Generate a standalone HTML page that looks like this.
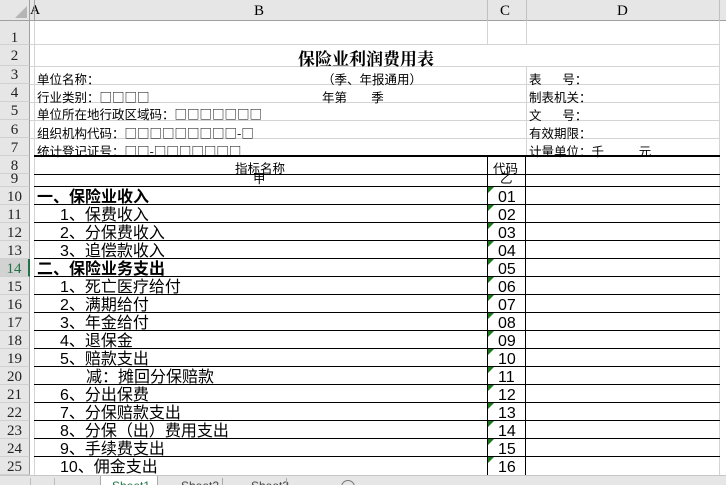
<!DOCTYPE html>
<html><head><meta charset="utf-8"><style>
*{margin:0;padding:0;box-sizing:border-box}
body{width:726px;height:485px;overflow:hidden;background:#fff;position:relative;font-family:"Liberation Sans","Noto Sans CJK SC",sans-serif;color:#000}
.a{position:absolute;white-space:nowrap}
.rh{position:absolute;left:0;width:30px;background:#e6e6e6;border-bottom:1px solid #d0d0d0;border-right:1px solid #a0a0a0;font-family:"Liberation Serif","Noto Sans CJK SC",serif;font-size:15px;text-align:center;color:#222}
.hl{position:absolute;left:30px;width:690px;height:1px;background:#d4d4d4}
.bl{position:absolute;left:34px;width:686px;height:1px;background:#000}
.t12{font-size:12.5px}
.bx{font-family:"Noto Sans CJK SC",sans-serif;font-size:12.5px;letter-spacing:0}
.t16{font-size:16px;line-height:18px}
</style></head><body>
<div class="a" style="left:0;top:0;width:726px;height:21px;background:#e6e6e6;border-bottom:1px solid #a0a0a0"></div>
<div class="a" style="left:0;top:0;width:30px;height:21px;border-right:1px solid #a0a0a0"></div>
<div class="a" style="left:15px;top:6px;width:0;height:0;border-left:12px solid transparent;border-bottom:12px solid #b5b5b5"></div>
<div class="a" style="left:30px;top:3px;font-family:'Liberation Serif',serif;font-size:14px">A</div>
<div class="a" style="left:34px;top:0;width:1px;height:21px;background:#a0a0a0"></div>
<div class="a" style="left:487px;top:0;width:1px;height:21px;background:#c0c0c0"></div>
<div class="a" style="left:526px;top:0;width:1px;height:21px;background:#c0c0c0"></div>
<div class="a" style="left:719px;top:0;width:1px;height:21px;background:#c0c0c0"></div>
<div class="a" style="left:254px;top:3px;font-family:'Liberation Serif',serif;font-size:15px">B</div>
<div class="a" style="left:500px;top:3px;font-family:'Liberation Serif',serif;font-size:15px">C</div>
<div class="a" style="left:617px;top:3px;font-family:'Liberation Serif',serif;font-size:15px">D</div>
<div class="rh" style="top:21px;height:24px;line-height:34px">1</div>
<div class="rh" style="top:45px;height:21px;line-height:22px">2</div>
<div class="rh" style="top:66px;height:18px;line-height:18px">3</div>
<div class="rh" style="top:84px;height:18px;line-height:18px">4</div>
<div class="rh" style="top:102px;height:18px;line-height:18px">5</div>
<div class="rh" style="top:120px;height:18px;line-height:20px">6</div>
<div class="rh" style="top:138px;height:18px;line-height:20px">7</div>
<div class="rh" style="top:156px;height:18px;line-height:20px">8</div>
<div class="rh" style="top:174px;height:13px;line-height:11px">9</div>
<div class="rh" style="top:187px;height:18px;line-height:21px">10</div>
<div class="rh" style="top:205px;height:18px;line-height:21px">11</div>
<div class="rh" style="top:223px;height:18px;line-height:21px">12</div>
<div class="rh" style="top:241px;height:18px;line-height:21px">13</div>
<div class="rh" style="top:259px;height:18px;line-height:21px;color:#217346;background:#d2d2d2;border-right:2px solid #217346">14</div>
<div class="rh" style="top:277px;height:18px;line-height:21px">15</div>
<div class="rh" style="top:295px;height:18px;line-height:21px">16</div>
<div class="rh" style="top:313px;height:18px;line-height:21px">17</div>
<div class="rh" style="top:331px;height:18px;line-height:21px">18</div>
<div class="rh" style="top:349px;height:18px;line-height:21px">19</div>
<div class="rh" style="top:367px;height:18px;line-height:21px">20</div>
<div class="rh" style="top:385px;height:18px;line-height:21px">21</div>
<div class="rh" style="top:403px;height:18px;line-height:21px">22</div>
<div class="rh" style="top:421px;height:18px;line-height:21px">23</div>
<div class="rh" style="top:439px;height:18px;line-height:21px">24</div>
<div class="rh" style="top:457px;height:18px;line-height:21px">25</div>
<div class="hl" style="top:44px"></div>
<div class="hl" style="top:66px"></div>
<div class="hl" style="top:84px"></div>
<div class="hl" style="top:102px"></div>
<div class="hl" style="top:120px"></div>
<div class="hl" style="top:138px"></div>
<div class="a" style="left:34px;top:21px;width:1px;height:454px;background:#d4d4d4"></div>
<div class="a" style="left:487px;top:21px;width:1px;height:24px;background:#d4d4d4"></div>
<div class="a" style="left:526px;top:21px;width:1px;height:24px;background:#d4d4d4"></div>
<div class="a" style="left:526px;top:66px;width:1px;height:90px;background:#d4d4d4"></div>
<div class="a" style="left:719px;top:21px;width:1px;height:454px;background:#d4d4d4"></div>
<div class="a" style="left:34px;top:155px;width:686px;height:2px;background:#000"></div>
<div class="bl" style="top:174px"></div>
<div class="bl" style="top:186px"></div>
<div class="bl" style="top:204px"></div>
<div class="bl" style="top:222px"></div>
<div class="bl" style="top:240px"></div>
<div class="bl" style="top:258px"></div>
<div class="bl" style="top:276px"></div>
<div class="bl" style="top:294px"></div>
<div class="bl" style="top:312px"></div>
<div class="bl" style="top:330px"></div>
<div class="bl" style="top:348px"></div>
<div class="bl" style="top:366px"></div>
<div class="bl" style="top:384px"></div>
<div class="bl" style="top:402px"></div>
<div class="bl" style="top:420px"></div>
<div class="bl" style="top:438px"></div>
<div class="bl" style="top:456px"></div>
<div class="a" style="left:487px;top:156px;width:1px;height:319px;background:#000"></div>
<div class="a" style="left:525px;top:156px;width:1px;height:319px;background:#000"></div>
<div class="a" style="left:488px;top:187px;border-top:6px solid #1a7a1a;border-right:6px solid transparent"></div>
<div class="a" style="left:488px;top:205px;border-top:6px solid #1a7a1a;border-right:6px solid transparent"></div>
<div class="a" style="left:488px;top:223px;border-top:6px solid #1a7a1a;border-right:6px solid transparent"></div>
<div class="a" style="left:488px;top:241px;border-top:6px solid #1a7a1a;border-right:6px solid transparent"></div>
<div class="a" style="left:488px;top:259px;border-top:6px solid #1a7a1a;border-right:6px solid transparent"></div>
<div class="a" style="left:488px;top:277px;border-top:6px solid #1a7a1a;border-right:6px solid transparent"></div>
<div class="a" style="left:488px;top:295px;border-top:6px solid #1a7a1a;border-right:6px solid transparent"></div>
<div class="a" style="left:488px;top:313px;border-top:6px solid #1a7a1a;border-right:6px solid transparent"></div>
<div class="a" style="left:488px;top:331px;border-top:6px solid #1a7a1a;border-right:6px solid transparent"></div>
<div class="a" style="left:488px;top:349px;border-top:6px solid #1a7a1a;border-right:6px solid transparent"></div>
<div class="a" style="left:488px;top:367px;border-top:6px solid #1a7a1a;border-right:6px solid transparent"></div>
<div class="a" style="left:488px;top:385px;border-top:6px solid #1a7a1a;border-right:6px solid transparent"></div>
<div class="a" style="left:488px;top:403px;border-top:6px solid #1a7a1a;border-right:6px solid transparent"></div>
<div class="a" style="left:488px;top:421px;border-top:6px solid #1a7a1a;border-right:6px solid transparent"></div>
<div class="a" style="left:488px;top:439px;border-top:6px solid #1a7a1a;border-right:6px solid transparent"></div>
<div class="a" style="left:488px;top:457px;border-top:6px solid #1a7a1a;border-right:6px solid transparent"></div>
<div class="a" style="left:298px;top:45px;font-family:'Liberation Serif','Noto Serif CJK SC',serif;font-weight:bold;font-size:17px">保险业利润费用表</div>
<div class="a t12" style="left:37px;top:69px">单位名称：</div>
<div class="a t12" style="left:322px;top:69px">（季、年报通用）</div>
<div class="a t12" style="left:529px;top:69px">表&nbsp;&nbsp;&nbsp;&nbsp;&nbsp;&nbsp;号：</div>
<div class="a t12" style="left:37px;top:87px">行业类别：<span class="bx">□□□□</span></div>
<div class="a t12" style="left:322px;top:87px">年第&nbsp;&nbsp;&nbsp;&nbsp;&nbsp;&nbsp;&nbsp;季</div>
<div class="a t12" style="left:529px;top:87px">制表机关：</div>
<div class="a t12" style="left:37px;top:104px">单位所在地行政区域码：<span class="bx">□□□□□□□</span></div>
<div class="a t12" style="left:529px;top:105px">文&nbsp;&nbsp;&nbsp;&nbsp;&nbsp;&nbsp;号：</div>
<div class="a t12" style="left:37px;top:123px">组织机构代码：<span class="bx">□□□□□□□□□-□</span></div>
<div class="a t12" style="left:529px;top:123px">有效期限：</div>
<div class="a t12" style="left:37px;top:141px">统计登记证号：<span class="bx">□□-□□□□□□□</span></div>
<div class="a t12" style="left:529px;top:141px">计量单位：千&nbsp;&nbsp;&nbsp;&nbsp;&nbsp;&nbsp;&nbsp;&nbsp;&nbsp;&nbsp;元</div>
<div class="a t12" style="left:235px;top:158px">指标名称</div>
<div class="a t12" style="left:493px;top:158px">代码</div>
<div class="a t12" style="left:253px;top:172px;line-height:14px">甲</div>
<div class="a t12" style="left:500px;top:172px;line-height:14px">乙</div>
<div class="a t16" style="left:37px;top:189px;font-weight:bold">一、保险业收入</div>
<div class="a t16" style="left:60px;top:207px">1、保费收入</div>
<div class="a t16" style="left:60px;top:225px">2、分保费收入</div>
<div class="a t16" style="left:60px;top:243px">3、追偿款收入</div>
<div class="a t16" style="left:37px;top:261px;font-weight:bold">二、保险业务支出</div>
<div class="a t16" style="left:60px;top:279px">1、死亡医疗给付</div>
<div class="a t16" style="left:60px;top:297px">2、满期给付</div>
<div class="a t16" style="left:60px;top:315px">3、年金给付</div>
<div class="a t16" style="left:60px;top:333px">4、退保金</div>
<div class="a t16" style="left:60px;top:351px">5、赔款支出</div>
<div class="a t16" style="left:86px;top:369px">减：摊回分保赔款</div>
<div class="a t16" style="left:60px;top:387px">6、分出保费</div>
<div class="a t16" style="left:60px;top:405px">7、分保赔款支出</div>
<div class="a t16" style="left:60px;top:423px">8、分保（出）费用支出</div>
<div class="a t16" style="left:60px;top:441px">9、手续费支出</div>
<div class="a t16" style="left:60px;top:459px">10、佣金支出</div>
<div class="a t16" style="left:498px;top:189px">01</div>
<div class="a t16" style="left:498px;top:207px">02</div>
<div class="a t16" style="left:498px;top:225px">03</div>
<div class="a t16" style="left:498px;top:243px">04</div>
<div class="a t16" style="left:498px;top:261px">05</div>
<div class="a t16" style="left:498px;top:279px">06</div>
<div class="a t16" style="left:498px;top:297px">07</div>
<div class="a t16" style="left:498px;top:315px">08</div>
<div class="a t16" style="left:498px;top:333px">09</div>
<div class="a t16" style="left:498px;top:351px">10</div>
<div class="a t16" style="left:498px;top:369px">11</div>
<div class="a t16" style="left:498px;top:387px">12</div>
<div class="a t16" style="left:498px;top:405px">13</div>
<div class="a t16" style="left:498px;top:423px">14</div>
<div class="a t16" style="left:498px;top:441px">15</div>
<div class="a t16" style="left:498px;top:459px">16</div>
<div class="a" style="left:0;top:475px;width:726px;height:10px;background:#e6e6e6;border-top:1px solid #c6c6c6;overflow:hidden">
<div class="a" style="left:100px;top:-1px;width:58px;height:12px;background:#fff;border-left:1px solid #aaa;border-right:1px solid #aaa"></div>
<div class="a" style="left:112px;top:3px;font-size:12px;color:#217346">Sheet1</div>
<div class="a" style="left:181px;top:3px;font-size:12px;color:#444">Sheet2</div>
<div class="a" style="left:222px;top:2px;width:1px;height:8px;background:#aaa"></div>
<div class="a" style="left:251px;top:3px;font-size:12px;color:#444">Sheet3</div>
<div class="a" style="left:286px;top:2px;width:1px;height:8px;background:#aaa"></div>
<div class="a" style="left:341px;top:4px;width:14px;height:14px;border:1px solid #777;border-radius:50%"></div>
<div class="a" style="left:30px;top:2px;width:1px;height:8px;background:#bbb"></div>
<div class="a" style="left:54px;top:2px;width:1px;height:8px;background:#bbb"></div>
</div>
</body></html>
